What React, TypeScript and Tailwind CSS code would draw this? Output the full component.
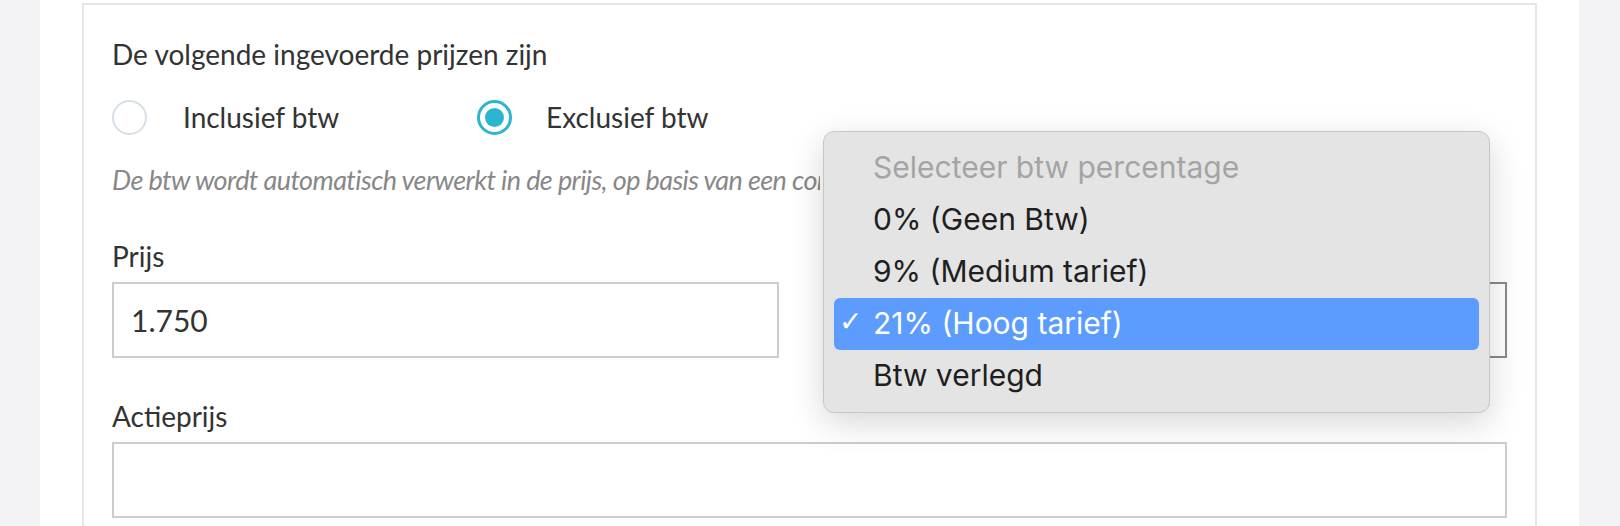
import React from "react";

const vatOptions = [
  { label: "0% (Geen Btw)", selected: false },
  { label: "9% (Medium tarief)", selected: false },
  { label: "21% (Hoog tarief)", selected: true },
  { label: "Btw verlegd", selected: false },
];

const Radio = ({ checked }: { checked: boolean }) =>
  checked ? (
    <span className="flex h-[35px] w-[35px] shrink-0 items-center justify-center rounded-full border-[3px] border-[#2bb5cf]">
      <span className="h-[19px] w-[19px] rounded-full bg-[#2bb5cf]" />
    </span>
  ) : (
    <span className="h-[35px] w-[35px] shrink-0 rounded-full border-2 border-[#d6dfe7]" />
  );

const VatDropdown = () => (
  <div className="absolute left-[823px] top-[131px] w-[667px] rounded-[11px] border border-[#c6c6c6] bg-[#e4e4e4] px-[10px] py-[10px] font-['Inter',sans-serif] text-[30px] shadow-[0_10px_34px_rgba(0,0,0,0.16)]">
    <div className="flex h-[52px] items-center pb-[3px] pl-[39px] leading-[36px] text-[#a4a4a4]">
      Selecteer btw percentage
    </div>
    {vatOptions.map((opt) => (
      <div
        key={opt.label}
        className={`relative flex h-[52px] items-center pb-[3px] pl-[39px] leading-[36px] ${
          opt.selected ? "rounded-[6px] bg-[#5b9cfe] text-white" : "text-[#1f1f1f]"
        }`}
      >
        {opt.selected && (
          <span className="absolute left-[5px] top-[8px] font-['DejaVu_Sans',sans-serif] text-[28px] leading-[32px]">
            ✓
          </span>
        )}
        {opt.label}
      </div>
    ))}
  </div>
);

export default function App() {
  return (
    <div className="relative h-[526px] w-[1620px] overflow-hidden bg-[#f3f3f5] font-['Lato',sans-serif] text-[28px] leading-[34px] text-[#333333]">
      <div className="ml-[40px] h-full w-[1539px] bg-white px-[42px] pt-[3px]">
        <div className="h-full border-x-2 border-t-2 border-[#e6e6e8] px-[28px] pt-[32px]">
          <p>De volgende ingevoerde prijzen zijn</p>

          {/* Incl / excl */}
          <div className="mt-[29px] flex h-[34px] items-center">
            <label className="flex w-[365px] items-center">
              <Radio checked={false} />
              <span className="ml-[36px]">Inclusief btw</span>
            </label>
            <label className="flex items-center">
              <Radio checked />
              <span className="ml-[34px]">Exclusief btw</span>
            </label>
          </div>

          {/* hint runs on under the open menu */}
          <p className="mt-[29px] w-[708px] overflow-hidden whitespace-nowrap text-[27px] italic tracking-[-0.6px] text-[#888888]">
            De btw wordt automatisch verwerkt in de prijs, op basis van een consumentenprijs inclusief btw.
          </p>

          <div className="mt-[42px] grid grid-cols-2 gap-x-[62px]">
            <div>
              <p>Prijs</p>
              <div className="mt-[9px] flex h-[76px] items-center border-2 border-[#cccccc] pl-[17px] text-[30px]">
                1.750
              </div>
            </div>
            <div>
              <div className="h-[34px]" />
              <div className="mt-[9px] h-[76px] border-2 border-[#8a8a8a]" />
            </div>
          </div>

          <div className="mt-[41px]">
            <p>Actieprijs</p>
            <div className="mt-[9px] h-[76px] border-2 border-[#cccccc]" />
          </div>
        </div>
      </div>

      <VatDropdown />
    </div>
  );
}
